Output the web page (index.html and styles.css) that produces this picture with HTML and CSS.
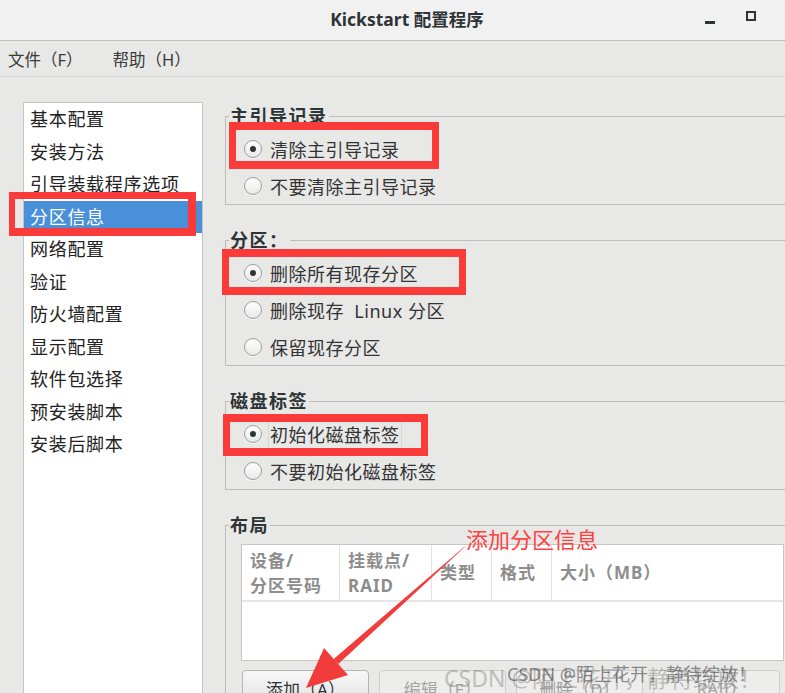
FILE: index.html
```html
<!DOCTYPE html>
<html lang="zh-CN">
<head>
    <meta charset="UTF-8">
    <title>Kickstart 配置程序</title>
    <link rel="stylesheet" href="styles.css">
</head>
<body>
<div class="window">
    <div class="titlebar">
        <span class="title">Kickstart 配置程序</span>
        <div class="winbtns">
            <span class="btn_min"></span>
            <span class="btn_max"></span>
        </div>
    </div>
    <div class="menubar">
        <span>文件（F）</span>
        <span>帮助（H）</span>
    </div>
    <div class="main">
        <ul class="sidebar">
            <li>基本配置</li>
            <li>安装方法</li>
            <li>引导装载程序选项</li>
            <li class="sel">分区信息</li>
            <li>网络配置</li>
            <li>验证</li>
            <li>防火墙配置</li>
            <li>显示配置</li>
            <li>软件包选择</li>
            <li>预安装脚本</li>
            <li>安装后脚本</li>
        </ul>
        <div class="content">
            <fieldset class="group">
                <legend>主引导记录</legend>
                <div class="opt"><span class="radio on"></span>清除主引导记录</div>
                <div class="opt"><span class="radio"></span>不要清除主引导记录</div>
            </fieldset>
            <fieldset class="group">
                <legend>分区：</legend>
                <div class="opt"><span class="radio on"></span>删除所有现存分区</div>
                <div class="opt"><span class="radio"></span>删除现存&nbsp; Linux 分区</div>
                <div class="opt"><span class="radio"></span>保留现存分区</div>
            </fieldset>
            <fieldset class="group">
                <legend>磁盘标签</legend>
                <div class="opt"><span class="radio on"></span><span class="focus">初始化磁盘标签</span></div>
                <div class="opt"><span class="radio"></span>不要初始化磁盘标签</div>
            </fieldset>
            <fieldset class="group layout">
                <legend>布局</legend>
                <div class="table">
                    <div class="thead">
                        <div class="th">设备/<br>分区号码</div>
                        <div class="th">挂载点/<br>RAID</div>
                        <div class="th">类型</div>
                        <div class="th">格式</div>
                        <div class="th">大小（MB）</div>
                    </div>
                    <div class="tbody"></div>
                </div>
                <div class="buttons">
                    <span class="btn">添加（A）</span>
                    <span class="btn off">编辑（E）</span>
                    <span class="btn off">删除（D）</span>
                    <span class="btn off">RAID</span>
                </div>
            </fieldset>
        </div>
    </div>

    <!-- annotations drawn over the screenshot -->
    <div class="mark mark_side"></div>
    <div class="mark mark_mbr"></div>
    <div class="mark mark_part"></div>
    <div class="mark mark_label"></div>
    <div class="note">添加分区信息</div>
    <svg class="arrow" width="785" height="693" viewBox="0 0 785 693">
        <polygon points="465.3,546.6 464.7,546.4 333.7,658.9 338.3,664.1" fill="#f23c3c"/>
        <polygon points="306,688 324,648 348,675" fill="#f23c3c"/>
    </svg>
    <div class="wm wm_big">CSDN @陌上花开，静待绽放！</div>
    <div class="wm wm_small">CSDN @陌上花开，静待绽放！</div>
</div>
</body>
</html>
```

FILE: styles.css
```css
*{margin:0; padding:0; box-sizing:border-box;}
body{width:785px; height:693px; overflow:hidden; background:#e8e8e7; font-family:"Noto Sans","Noto Sans CJK SC",sans-serif; color:#2e3436;}
ul{list-style:none;}

.window{position:relative; width:785px; height:693px; overflow:hidden; display:flex; flex-direction:column;}

/* ====== title bar ====== */
.titlebar{flex:none; height:41px; display:flex; align-items:center; background:#f1f1f1; border-bottom:1px solid #bcbcbc;}
.titlebar .title{flex:1; text-align:center; padding-left:109px; margin-top:-4px; font-size:17.5px; font-weight:700; color:#2e3436;}
.winbtns{width:80px; display:flex; align-items:center; gap:31px;}
.btn_min{width:10px; height:3px; margin-top:4px; background:#2e3436;}
.btn_max{width:10px; height:10px; margin-top:-8px; border:2px solid #2e3436;}

/* ====== menu ====== */
.menubar{flex:none; height:36px; display:flex; align-items:center; gap:30px; padding-left:8px; font-size:16.5px; color:#3a3a3a; background:#e8e8e7; border-bottom:1px solid #d6d6d4;}

/* ====== body ====== */
.main{flex:1; min-height:0; display:flex; padding:25px 0 0 23px;}
.sidebar{flex:none; width:180px; background:#fff; border:1px solid #c4c4c4; border-bottom:0 none;}
.sidebar li{height:32.5px; line-height:32.5px; padding-left:6px; font-size:18px; letter-spacing:.7px; color:#222;}
.sidebar li.sel{background:#4a90d9; color:#fff;}

.content{flex:none; width:600px; margin-left:22px; padding-top:3px;}
.group{border:1px solid #bcbcbc; padding:3px 0 0 3px; min-width:0;}
.group + .group{margin-top:24px;}
.group legend{padding:0 1px; line-height:22px; font-size:18px; font-weight:700; letter-spacing:1.5px; color:#2e3436;}
.opt{height:37px; display:flex; align-items:center; gap:8px; padding-left:15px; font-size:18px; letter-spacing:.5px; color:#333;}
.radio{flex:none; position:relative; width:18px; height:18px; border:1px solid #9c9c9c; border-radius:50%; background:linear-gradient(#ffffff,#e9e9e9); box-shadow:0 1px 0 rgba(255,255,255,.8);}
.radio.on:after{content:""; position:absolute; left:5px; top:5px; width:6px; height:6px; border-radius:50%; background:#2e3436;}
.focus{outline:1px solid #d6d6d6; outline-offset:1px;}

/* ====== layout table ====== */
.layout{padding-top:8px; padding-bottom:40px;}
.table{margin-left:12px; width:543px; background:#fff; border:1px solid #c6c6c6;}
.thead{display:grid; grid-template-columns:98px 92px 60px 60px 1fr; height:57px; border-bottom:2px solid #e6e6e6;}
.th{display:flex; align-items:center; padding:0 8px; font-size:17px; font-weight:700; line-height:25px; letter-spacing:1px; color:#8d8d8d; border-right:1px solid #e2e2e2;}
.th:last-child{border-right:0 none;}
.tbody{height:58px;}
.buttons{display:flex; gap:10px; margin:9px 0 0 13px;}
.btn{flex:none; width:127px; height:36px; display:flex; align-items:center; justify-content:center; font-size:17px; color:#2e3436; border:1px solid #b4b4b4; border-radius:4px; background:linear-gradient(#f7f7f7,#e3e3e3);}
.btn.off{color:#a4a4a4; border-color:#cdcdcd; background:#ededec;}

/* ====== annotations ====== */
.mark{position:absolute; border:7px solid #fb3a3a; border-top-width:8px; border-bottom-width:8px;}
.mark_side{left:9px; top:192px; width:187px; height:44px; border-width:7px 8px 8px 6px;}
.mark_mbr{left:229px; top:122px; width:210px; height:47px;}
.mark_part{left:222px; top:249px; width:244px; height:46px;}
.mark_label{left:223px; top:414px; width:205px; height:42px;}
.note{position:absolute; left:466px; top:524px; font-size:22px; line-height:28px; color:#ff4242; font-family:"Noto Sans CJK SC",sans-serif;}
.arrow{position:absolute; left:0; top:0;}
.wm{position:absolute; white-space:nowrap; font-family:"Noto Sans","Noto Sans CJK SC",sans-serif;}
.wm_big{left:444px; top:660px; font-size:23px; color:rgba(110,110,110,.4);}
.wm_small{left:507px; top:660px; font-size:18px; color:rgba(50,50,50,.55);}
```
